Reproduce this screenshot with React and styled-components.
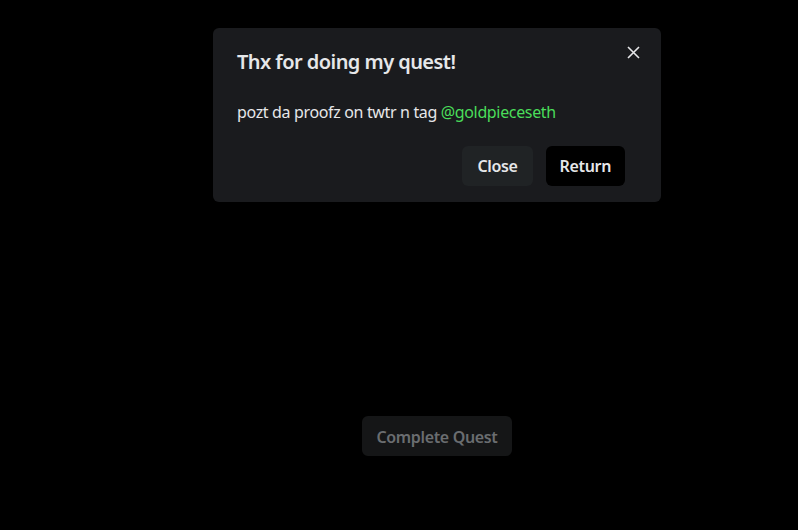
import React from 'react';
import styled, { createGlobalStyle } from 'styled-components';

const GlobalStyle = createGlobalStyle`
  html, body {
    margin: 0;
    padding: 0;
    background: #000;
  }
  body {
    font-family: "Noto Sans", "Open Sans", sans-serif;
  }
`;

const Page = styled.div`
  position: relative;
  width: 798px;
  height: 530px;
  background: #000;
  display: flex;
  justify-content: center;
  padding-left: 76px;
  box-sizing: border-box;
`;

const QuestArea = styled.div`
  padding-top: 416px;
`;

const QuestButton = styled.button`
  height: 40px;
  width: 150px;
  border: none;
  border-radius: 6px;
  background: #151617;
  color: #6a6d70;
  font-family: inherit;
  font-size: 16px;
  font-weight: 600;
  letter-spacing: -0.35px;
  padding-top: 2px;
`;

const Overlay = styled.div`
  position: absolute;
  inset: 0;
  display: flex;
  justify-content: center;
  align-items: flex-start;
  padding-top: 28px;
  padding-left: 76px;
`;

const Dialog = styled.section`
  position: relative;
  width: 448px;
  background: #1a1b1e;
  border-radius: 6px;
  color: #e6e7e9;
`;

const Header = styled.header`
  padding: 20px 24px 0;
  font-size: 20px;
  font-weight: 600;
  line-height: 28px;
  letter-spacing: -0.55px;
`;

const CloseIcon = styled.button`
  position: absolute;
  top: 8px;
  right: 12px;
  width: 32px;
  height: 32px;
  display: flex;
  align-items: center;
  justify-content: center;
  background: transparent;
  border: none;
  color: #e6e7e9;
  padding: 0;
`;

const Body = styled.div`
  padding: 24px 24px 0;
  font-size: 16px;
  line-height: 24px;
  letter-spacing: -0.35px;
`;

const Handle = styled.span`
  color: #4ade5a;
`;

const Footer = styled.footer`
  display: flex;
  justify-content: flex-end;
  gap: 13px;
  padding: 22px 36px 16px 24px;
`;

const Button = styled.button`
  height: 40px;
  padding: 0 ${(p) => (p.$dark ? 14 : 15)}px;
  border: none;
  border-radius: 6px;
  font-family: inherit;
  font-size: 16px;
  font-weight: 600;
  letter-spacing: -0.35px;
  color: #e6e7e9;
  background: ${(p) => (p.$dark ? '#000' : '#202325')};
`;

export default function App() {
  return (
    <>
      <GlobalStyle />
      <Page>
        <QuestArea>
          <QuestButton>Complete Quest</QuestButton>
        </QuestArea>
        <Overlay>
          <Dialog>
            <Header>Thx for doing my quest!</Header>
            <CloseIcon aria-label="Close">
              <svg width="13" height="13" viewBox="0 0 13 13">
                <path d="M1 1L12 12M12 1L1 12" stroke="currentColor" strokeWidth="1.6" />
              </svg>
            </CloseIcon>
            <Body>
              pozt da proofz on twtr n tag <Handle>@goldpieceseth</Handle>
            </Body>
            <Footer>
              <Button>Close</Button>
              <Button $dark>Return</Button>
            </Footer>
          </Dialog>
        </Overlay>
      </Page>
    </>
  );
}
